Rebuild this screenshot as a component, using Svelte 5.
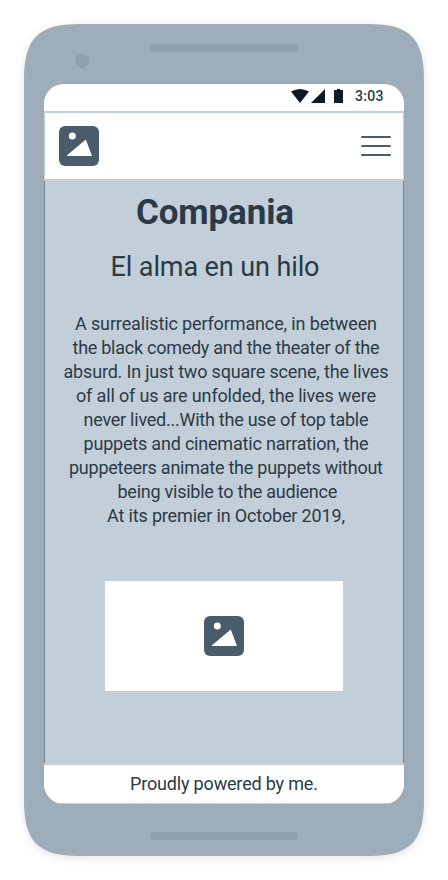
<script>
  const lines = [
    ['A surrealistic performance, in between', 302],
    ['the black comedy and the theater of the', 307],
    ['absurd. In just two square scene, the lives', 325],
    ['of all of us are unfolded, the lives were', 300],
    ['never lived...With the use of top table', 285],
    ['puppets and cinematic narration, the', 285],
    ['puppeteers animate the puppets without', 314],
    ['being visible to the audience\u00a0', 224],
    ['At its premier in October 2019,', 238]
  ];

  // Tracks a text run out (or in) until it has the given width.
  function fit(node, width) {
    const gaps = node.textContent.length - 1;
    const spacing = (width - node.getBoundingClientRect().width) / gaps;
    node.style.letterSpacing = `${spacing}px`;
    node.style.marginRight = `${-spacing}px`;
  }
</script>

{#snippet picture()}
  <svg class="picture" width="40" height="40" viewBox="0 0 40 40">
    <rect width="40" height="40" rx="6" fill="#4a5c6a" />
    <circle cx="13.3" cy="10" r="3.5" fill="#fff" />
    <path d="M8 29.2 26.8 13.5 33 30H8Z" fill="#fff" />
  </svg>
{/snippet}

<div class="device">
  <svg class="shell" width="400" height="832" viewBox="0 0 400 832">
    <path d="M0 56C0 14 14 0 56 0H344C386 0 400 14 400 56V776C400 818 386 832 344 832H56C14 832 0 818 0 776Z" fill="#9dadb9" />
    <circle cx="58" cy="37" r="7" fill="#8f9fae" />
  </svg>
  <div class="speaker"></div>
  <div class="screen">
    <div class="status">
      <svg width="54" height="16" viewBox="0 0 54 16" fill="#101a22">
        <path d="M0 3.6Q9 -1.8 18 3.6L9 15Z" />
        <path d="M20 15 34 1V15Z" />
        <path d="M43 2H46V1H49V2H52V15H43Z" />
      </svg>
      <span class="time"><span use:fit={28.5}>3:03</span></span>
    </div>
    <header>
      {@render picture()}
      <div class="menu"><i></i><i></i><i></i></div>
    </header>
    <main>
      <h1><span use:fit={158}>Compania</span></h1>
      <h2><span use:fit={209}>El alma en un hilo</span></h2>
      <div class="copy">
        {#each lines as [text, width]}
          <p><span use:fit={width}>{text}</span></p>
        {/each}
      </div>
      <div class="card">{@render picture()}</div>
    </main>
    <footer><span use:fit={188}>Proudly powered by me.</span></footer>
  </div>
  <div class="speaker bottom"></div>
</div>

<style>
  :global(body) {
    background: #fff;
  }
  .device {
    box-sizing: border-box;
    position: relative;
    width: 400px;
    height: 832px;
    margin: 24px;
    padding: 20px 20px 16px;
    display: flex;
    flex-direction: column;
    align-items: center;
    font-family: Roboto, sans-serif;
    color: #2a3a47;
  }
  .shell {
    position: absolute;
    inset: 0;
    z-index: -1;
    overflow: visible;
    filter: drop-shadow(0 2px 4px rgba(0, 0, 0, 0.1));
  }
  svg {
    display: block;
  }
  span {
    white-space: nowrap;
    display: inline-block;
  }
  .speaker {
    width: 148px;
    height: 8px;
    border-radius: 4px;
    background: #8f9fae;
    flex: none;
  }
  .bottom {
    margin-top: auto;
  }
  .screen {
    box-sizing: border-box;
    width: 360px;
    height: 720px;
    margin-top: 32px;
    border-radius: 20px;
    overflow: hidden;
    background: #c3cfd8;
    display: flex;
    flex-direction: column;
    padding-bottom: 1px;
    flex: none;
  }
  .status {
    height: 27px;
    background: #fff;
    display: flex;
    justify-content: flex-end;
    align-items: flex-start;
    box-sizing: border-box;
    padding: 4px 20px 0 0;
  }
  .time {
    width: 29px;
    margin-left: 10px;
    font-size: 14px;
    line-height: 17px;
    font-weight: 500;
  }
  header {
    height: 66px;
    margin: 2px 1px;
    padding: 0 12px 0 14px;
    background: #fff;
    display: flex;
    align-items: center;
    justify-content: space-between;
  }
  .menu {
    width: 30px;
    display: flex;
    flex-direction: column;
    gap: 7px;
  }
  .menu i {
    height: 2px;
    border-radius: 1px;
    background: #4a5c6a;
  }
  main {
    box-sizing: border-box;
    height: 582px;
    border: solid #758998;
    border-width: 0 1px;
    text-align: center;
  }
  h1 {
    margin: 0;
    padding: 11px 18px 0 0;
    font-size: 35px;
    line-height: 42px;
    font-weight: 700;
  }
  h2 {
    margin: 0;
    padding: 17px 18px 0 0;
    font-size: 27px;
    line-height: 32px;
    font-weight: 400;
  }
  .copy {
    padding: 29px 0 0 4px;
    font-size: 18px;
    line-height: 24px;
  }
  p {
    margin: 0;
    height: 24px;
  }
  p:nth-child(8) {
    padding-left: 7px;
  }
  .card {
    width: 238px;
    height: 110px;
    margin: 53px auto 0;
    background: #fff;
    display: flex;
    align-items: center;
    justify-content: center;
  }
  footer {
    height: 38px;
    margin-top: 2px;
    background: #fff;
    text-align: center;
    font-size: 18px;
    line-height: 38px;
  }
</style>
